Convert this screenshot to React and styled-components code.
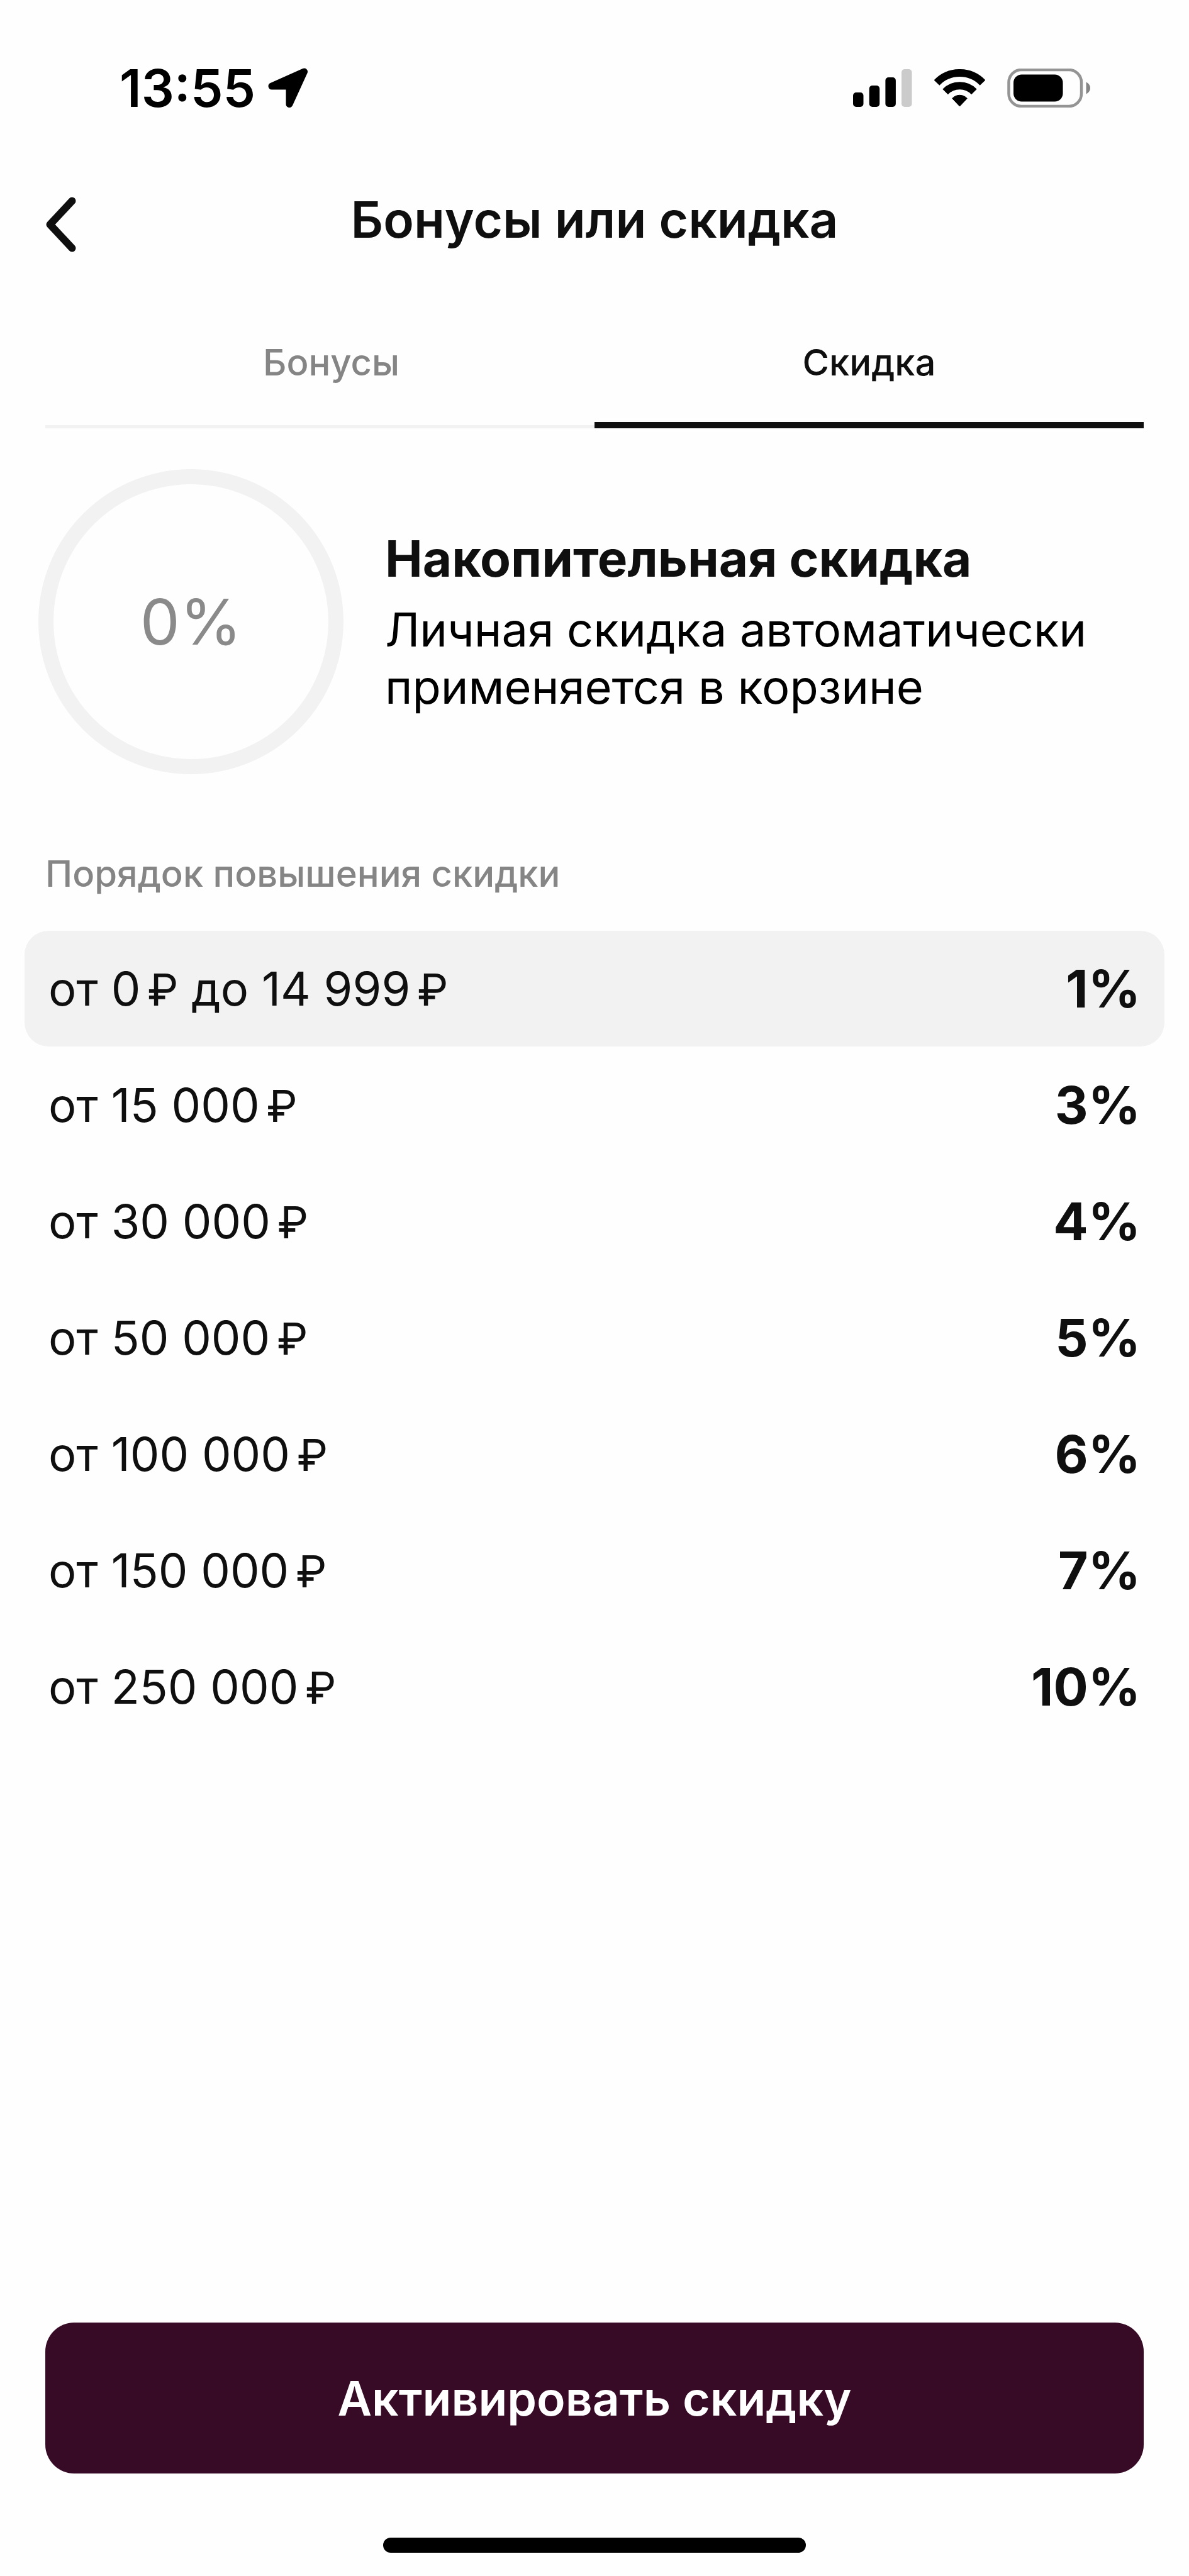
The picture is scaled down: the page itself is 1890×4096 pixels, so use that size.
import React from "react";
import styled, { createGlobalStyle } from "styled-components";

const GlobalStyle = createGlobalStyle`
  * { box-sizing: border-box; }
  body { margin: 0; background: #fefefe; }
`;

const Screen = styled.div`
  display: flex;
  flex-direction: column;
  min-height: 100vh;
  background: #fefefe;
  color: #0f0f0f;
  font-family: Inter, "Noto Sans", sans-serif;
  font-size: 74px;
`;

const StatusBar = styled.div`
  display: flex;
  align-items: center;
  justify-content: space-between;
  height: 280px;
  padding: 0 157px 0 190px;
  color: #000;
`;

const StatusGroup = styled.div`
  display: flex;
  align-items: center;
  gap: ${(p) => p.$gap}px;
`;

const Clock = styled.time`
  font-size: 82px;
  font-weight: 600;
`;

const Header = styled.header`
  display: grid;
  grid-template-columns: 120px 1fr 120px;
  align-items: start;
  padding: 0 72px;
`;

const BackButton = styled.button`
  display: flex;
  align-items: center;
  height: 154px;
  padding: 0;
  border: 0;
  background: none;
  color: inherit;
`;

const Title = styled.h1`
  margin: 0;
  font-size: 80px;
  font-weight: 600;
  line-height: 138px;
  text-align: center;
`;

const Tabs = styled.div`
  display: grid;
  grid-template-columns: 1fr 1fr;
  margin: 36px 72px 0;
`;

const Tab = styled.button`
  height: 211px;
  padding: 0;
  border: 0;
  background: none;
  box-shadow: inset 0 ${(p) => (p.$active ? "-10px #0f0f0f" : "-5px #f2f2f2")};
  color: ${(p) => (p.$active ? "#0f0f0f" : "#858585")};
  font: inherit;
  font-size: 58px;
  font-weight: 500;

  &:first-child {
    padding-left: 36px;
  }
`;

const Summary = styled.section`
  display: flex;
  align-items: center;
  gap: 66px;
  margin-top: 65px;
  padding: 0 72px 0 61px;
`;

const Ring = styled.div`
  display: grid;
  flex: none;
  place-items: center;
  width: 485px;
  height: 485px;
  border: 24px solid #f2f2f2;
  border-radius: 50%;
  color: #8a8a8a;
  font-size: 100px;
`;

const SummaryText = styled.div`
  display: grid;
  gap: 18px;
  padding-bottom: 2px;
`;

const SummaryTitle = styled.h2`
  margin: 0;
  font-size: 80px;
  font-weight: 700;
  line-height: 100px;
`;

const SummaryNote = styled.p`
  margin: 0;
  color: #000;
  font-size: 74px;
  line-height: 91px;
`;

const SectionTitle = styled.h3`
  margin: 118px 72px 50px;
  color: #858585;
  font-size: 58px;
  font-weight: 500;
  line-height: 80px;
`;

const TableWrap = styled.div`
  padding: 0 39px;
`;

const Tiers = styled.table`
  width: 100%;
  border-collapse: separate;
  border-spacing: 0 1px;
`;

const TierRow = styled.tr`
  height: 184px;
`;

const Threshold = styled.th`
  padding: 0 38px;
  border-radius: 38px 0 0 38px;
  background: ${(p) => (p.$current ? "#f2f2f2" : "transparent")};
  font-weight: 400;
  text-align: left;
`;

const Percent = styled.td`
  padding: 0 38px;
  border-radius: 0 38px 38px 0;
  background: ${(p) => (p.$current ? "#f2f2f2" : "transparent")};
  font-size: 82px;
  font-weight: 700;
  text-align: right;
`;

const Ruble = styled.span`
  margin-left: 11px;
  font-size: 70px;
`;

const Footer = styled.footer`
  display: flex;
  flex-direction: column;
  align-items: center;
  gap: 102px;
  margin-top: auto;
  padding: 0 72px 37px;
`;

const ActivateButton = styled.button`
  width: 100%;
  height: 240px;
  padding: 0;
  border: 0;
  border-radius: 46px;
  background: #370a25;
  color: #fff;
  font: inherit;
  font-size: 75px;
  font-weight: 600;
`;

const HomeIndicator = styled.div`
  width: 38.5%;
  height: 24px;
  border-radius: 12px;
  background: #000;
`;

const LocationIcon = () => (
  <svg width="64" height="64" viewBox="0 0 64 64" aria-hidden="true">
    <path
      d="M6 29 57.500 6 34 57.500V29Z"
      fill="#000"
      stroke="#000"
      strokeWidth="11"
      strokeLinejoin="round"
    />
  </svg>
);

const SignalIcon = () => (
  <svg width="94" height="60" viewBox="0 0 94 60" aria-hidden="true">
    <rect x="0" y="37" width="16.500" height="23" rx="5" />
    <rect x="25.700" y="26" width="16.500" height="34" rx="5" />
    <rect x="51.400" y="13" width="16.500" height="47" rx="5" />
    <rect x="77" y="0" width="16.500" height="60" rx="5" fill="#cbcbcb" />
  </svg>
);

const WifiIcon = () => (
  <svg width="81" height="60" viewBox="0 0 81 60" aria-hidden="true">
    <g fill="none" stroke="#000" strokeWidth="12">
      <path d="M4 21.500A50.700 50.700 0 0 1 77 21.500" />
      <path d="M17.600 36A32 32 0 0 1 63.400 36" />
    </g>
    <path d="M28.700 46.500A16 16 0 0 1 52.300 46.500L40.500 59Z" stroke="#000" strokeLinejoin="round" />
  </svg>
);

const BatteryIcon = () => (
  <svg width="132" height="62" viewBox="0 0 132 62" aria-hidden="true">
    <rect x="2.500" y="2" width="115.500" height="58" rx="20" fill="none" stroke="#949494" strokeWidth="4.500" />
    <rect x="10" y="9.500" width="78.500" height="43" rx="13" />
    <path d="M125.500 21.500v19c4-2 6.500-5.500 6.500-9.500s-2.500-7.500-6.500-9.500Z" fill="#858585" />
  </svg>
);

const ChevronIcon = () => (
  <svg width="50" height="88" viewBox="0 0 50 88" aria-hidden="true">
    <path
      d="M42.500 6.500 7.500 44 42.500 81.500"
      fill="none"
      stroke="currentColor"
      strokeWidth="12"
      strokeLinecap="round"
      strokeLinejoin="round"
    />
  </svg>
);

const tiers = [
  { from: "0", to: "14 999", percent: "1%", current: true },
  { from: "15 000", percent: "3%" },
  { from: "30 000", percent: "4%" },
  { from: "50 000", percent: "5%" },
  { from: "100 000", percent: "6%" },
  { from: "150 000", percent: "7%" },
  { from: "250 000", percent: "10%" },
];

export default function App() {
  return (
    <Screen>
      <GlobalStyle />
      <StatusBar>
        <StatusGroup $gap={20}>
          <Clock>13:55</Clock>
          <LocationIcon />
        </StatusGroup>
        <StatusGroup $gap={35}>
          <SignalIcon />
          <WifiIcon />
          <BatteryIcon />
        </StatusGroup>
      </StatusBar>
      <Header>
        <BackButton type="button" aria-label="Назад">
          <ChevronIcon />
        </BackButton>
        <Title>Бонусы или скидка</Title>
      </Header>
      <Tabs role="tablist">
        <Tab type="button" role="tab" aria-selected="false">Бонусы</Tab>
        <Tab type="button" role="tab" aria-selected="true" $active>Скидка</Tab>
      </Tabs>
      <main>
        <Summary>
          <Ring>0%</Ring>
          <SummaryText>
            <SummaryTitle>Накопительная скидка</SummaryTitle>
            <SummaryNote>
              Личная скидка автоматически
              <br />
              применяется в корзине
            </SummaryNote>
          </SummaryText>
        </Summary>
        <SectionTitle id="tiers-title">Порядок повышения скидки</SectionTitle>
        <TableWrap>
          <Tiers aria-labelledby="tiers-title">
            <tbody>
              {tiers.map(({ from, to, percent, current }) => (
                <TierRow key={percent}>
                  <Threshold scope="row" $current={current}>
                    от {from}
                    <Ruble>₽</Ruble>
                    {to && (
                      <>
                        {" "}до {to}
                        <Ruble>₽</Ruble>
                      </>
                    )}
                  </Threshold>
                  <Percent $current={current}>{percent}</Percent>
                </TierRow>
              ))}
            </tbody>
          </Tiers>
        </TableWrap>
      </main>
      <Footer>
        <ActivateButton type="button">Активировать скидку</ActivateButton>
        <HomeIndicator />
      </Footer>
    </Screen>
  );
}
